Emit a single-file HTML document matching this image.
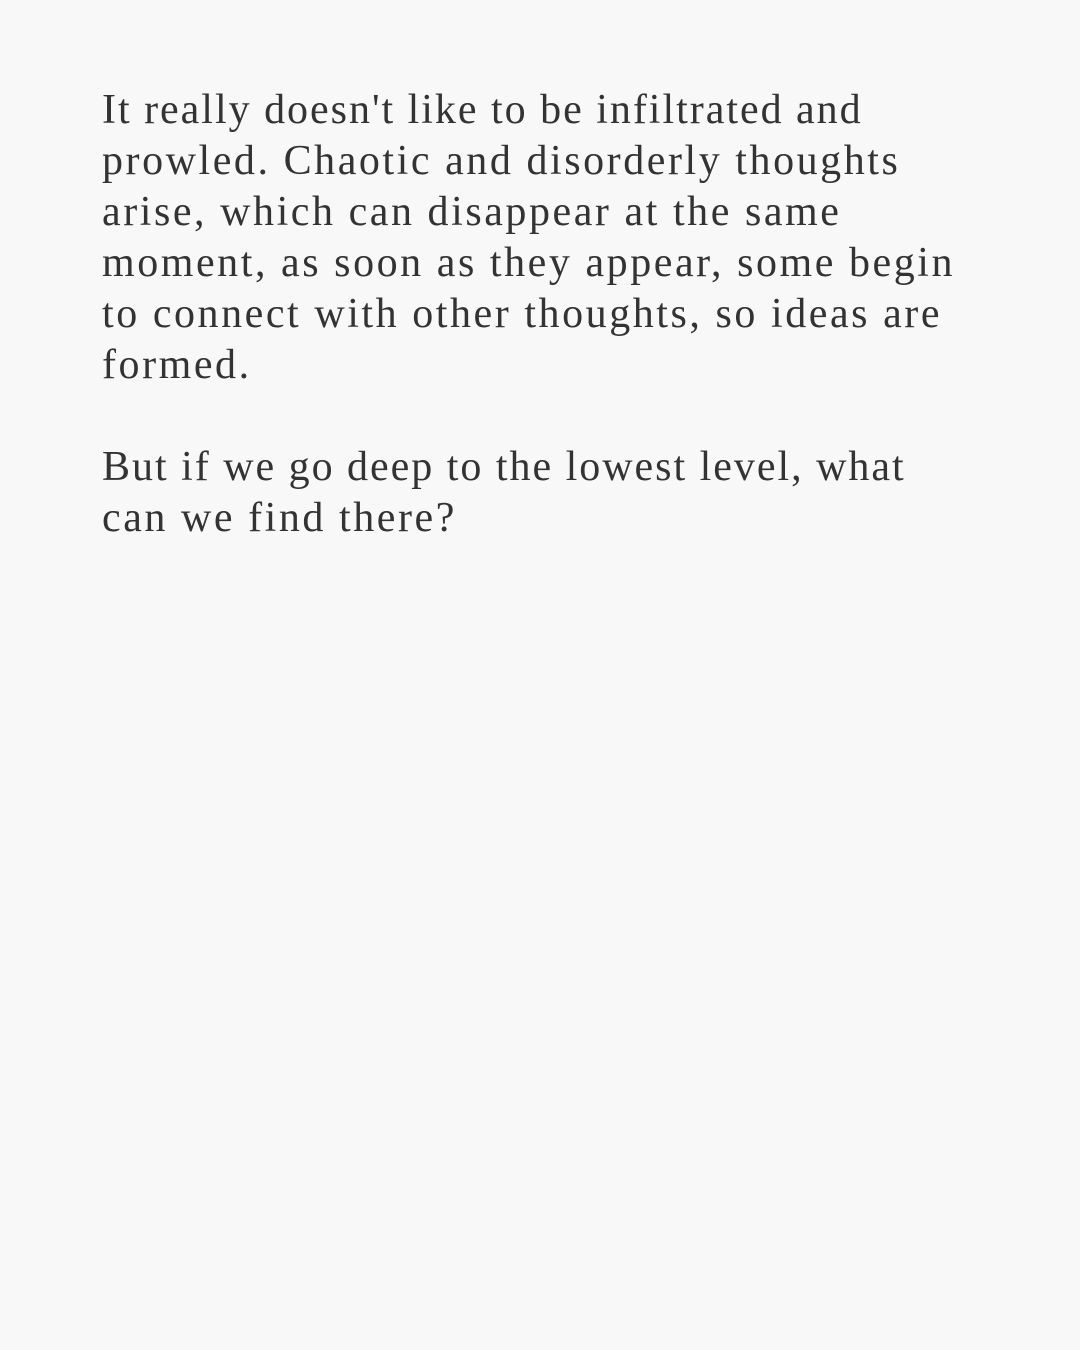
<!DOCTYPE html>
<html><head><meta charset="utf-8"><style>
html,body{margin:0;padding:0;background:#f8f8f8;}
body{width:1080px;height:1350px;overflow:hidden;position:relative;}
.t{position:absolute;left:102px;top:85px;font-family:"Liberation Serif",serif;font-size:42px;line-height:51px;color:#333;white-space:nowrap;letter-spacing:2.55px;}
.n{letter-spacing:1.98px;}
</style></head><body>
<div class="t"><span class="n">It really doesn't like to be infiltrated and</span><br>prowled. Chaotic and disorderly thoughts<br>arise, which can disappear at the same<br>moment, as soon as they appear, some begin<br>to connect with other thoughts, so ideas are<br>formed.<br><br><span class="n">But if we go deep to the lowest level, what</span><br>can we find there?</div>
</body></html>
